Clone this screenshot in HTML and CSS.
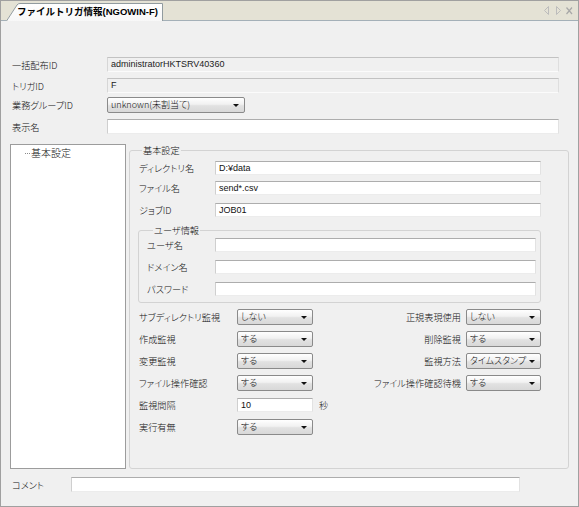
FILE: index.html
```html
<!DOCTYPE html>
<html lang="ja">
<head>
<meta charset="utf-8">
<title>ファイルトリガ情報</title>
<link rel="stylesheet" href="styles.css">
</head>
<body>
<div class="window">
  <div class="tabbar">
    <div class="tab">
      <svg class="tab-shape" width="157" height="18" viewBox="0 0 157 18">
        <defs>
          <linearGradient id="tg" x1="0" y1="0" x2="0" y2="1">
            <stop offset="0" stop-color="#ffffff"/>
            <stop offset="1" stop-color="#f7f7f7"/>
          </linearGradient>
        </defs>
        <path d="M0 18 L11 2 Q12 0.5 14 0.5 L156.5 0.5 L156.5 18 Z" fill="url(#tg)"/>
        <path d="M0.5 18 L11 2 Q12 0.5 14 0.5 L156.5 0.5 L156.5 18" fill="none" stroke="#919b9f"/>
      </svg>
      <div class="tab-label">ファイルトリガ情報(NGOWIN-F)</div>
    </div>
    <div class="tab-tools">
      <svg width="30" height="9" viewBox="0 0 30 9">
        <path d="M5.5 0.5 L1.5 4.5 L5.5 8.5 Z" fill="none" stroke="#bcbcbc"/>
        <path d="M13.5 0.5 L17.5 4.5 L13.5 8.5 Z" fill="none" stroke="#bcbcbc"/>
        <path d="M23.5 1.5 L29 8 M29 1.5 L23.5 8" fill="none" stroke="#a8a8a8" stroke-width="1.2"/>
      </svg>
    </div>
  </div>

  <div class="content">
    <div class="head-form">
      <div class="row">
        <span class="lbl">一括配布ID</span>
        <div class="field disabled wide latin">administratorHKTSRV40360</div>
      </div>
      <div class="row gap6">
        <span class="lbl">トリガID</span>
        <div class="field disabled wide latin">F</div>
      </div>
      <div class="row gap4">
        <span class="lbl">業務グループID</span>
        <div class="select sel-head"><span class="sel-text">unknown(未割当て)</span><span class="arrow"></span></div>
      </div>
      <div class="row gap6">
        <span class="lbl">表示名</span>
        <div class="field wide"></div>
      </div>
    </div>

    <div class="main">
      <div class="tree">
        <div class="tree-item"><span class="dots"></span><span class="tree-text">基本設定</span></div>
      </div>

      <fieldset class="group">
        <legend>基本設定</legend>
        <div class="g-row">
          <span class="g-lbl">ディレクトリ名</span>
          <div class="field g-field latin">D:¥data</div>
        </div>
        <div class="g-row mt6">
          <span class="g-lbl">ファイル名</span>
          <div class="field g-field latin">send*.csv</div>
        </div>
        <div class="g-row mt8">
          <span class="g-lbl">ジョブID</span>
          <div class="field g-field latin">JOB01</div>
        </div>

        <fieldset class="user">
          <legend>ユーザ情報</legend>
          <div class="u-row">
            <span class="u-lbl">ユーザ名</span>
            <div class="field u-field"></div>
          </div>
          <div class="u-row mt8">
            <span class="u-lbl">ドメイン名</span>
            <div class="field u-field"></div>
          </div>
          <div class="u-row mt8">
            <span class="u-lbl">パスワード</span>
            <div class="field u-field"></div>
          </div>
        </fieldset>

        <div class="opts">
          <span class="o-lbl">サブディレクトリ監視</span>
          <div class="select"><span class="sel-text">しない</span><span class="arrow"></span></div>
          <span class="o-lbl right">正規表現使用</span>
          <div class="select"><span class="sel-text">しない</span><span class="arrow"></span></div>

          <span class="o-lbl">作成監視</span>
          <div class="select"><span class="sel-text">する</span><span class="arrow"></span></div>
          <span class="o-lbl right">削除監視</span>
          <div class="select"><span class="sel-text">する</span><span class="arrow"></span></div>

          <span class="o-lbl">変更監視</span>
          <div class="select"><span class="sel-text">する</span><span class="arrow"></span></div>
          <span class="o-lbl right">監視方法</span>
          <div class="select"><span class="sel-text">タイムスタンプ</span><span class="arrow"></span></div>

          <span class="o-lbl">ファイル操作確認</span>
          <div class="select"><span class="sel-text">する</span><span class="arrow"></span></div>
          <span class="o-lbl right">ファイル操作確認待機</span>
          <div class="select"><span class="sel-text">する</span><span class="arrow"></span></div>

          <span class="o-lbl">監視間隔</span>
          <div class="field o-field latin">10</div>
          <span class="unit">秒</span>
          <span></span>

          <span class="o-lbl">実行有無</span>
          <div class="select"><span class="sel-text">する</span><span class="arrow"></span></div>
          <span></span>
          <span></span>
        </div>
      </fieldset>
    </div>

    <div class="comment-row">
      <span class="c-lbl">コメント</span>
      <div class="field c-field"></div>
    </div>
  </div>
</div>
</body>
</html>
```

FILE: styles.css
```css
* {
  box-sizing: border-box;
}

html,
body {
  margin: 0;
  padding: 0;
}

body {
  font-family: "Noto Sans CJK JP", sans-serif;
  font-size: 9.2px;
  line-height: 12px;
  font-weight: 300;
  font-feature-settings: "palt";
  color: #111;
  background: #f0f0f0;
}

.latin {
  font-family: "Liberation Sans", "Noto Sans CJK JP", sans-serif;
  font-size: 9px;
  font-weight: 400;
}

.window {
  width: 579px;
  height: 507px;
  border: 1px solid #a0a0a0;
  background: #f0f0f0;
  display: flex;
  flex-direction: column;
}

/* ---------- tab bar ---------- */
.tabbar {
  height: 20px;
  flex: none;
  background: #e4e2d5;
  border-bottom: 1px solid #a4b0b8;
  display: flex;
  align-items: flex-end;
}

.tab {
  position: relative;
  width: 157px;
  height: 18px;
  margin-left: 5px;
  margin-bottom: -1px;
}

.tab-shape {
  position: absolute;
  left: 0;
  top: 0;
}

.tab-label {
  position: relative;
  padding-left: 11px;
  line-height: 18px;
  font-family: "Liberation Sans", "Noto Sans CJK JP", sans-serif;
  font-size: 9.5px;
  font-weight: bold;
  color: #000;
  white-space: nowrap;
  font-feature-settings: normal;
}

.tab-tools {
  margin-left: auto;
  margin-right: 5px;
  align-self: center;
  display: flex;
}

/* ---------- content ---------- */
.content {
  flex: 1;
  display: flex;
  flex-direction: column;
  padding-top: 36px;
}

.head-form {
  padding-left: 11px;
  display: flex;
  flex-direction: column;
}

.row {
  display: flex;
  align-items: center;
}

.gap6 {
  margin-top: 6px;
}

.gap4 {
  margin-top: 4px;
}

.lbl {
  width: 95px;
  flex: none;
}

.field {
  height: 15px;
  border: 1px solid;
  border-color: #adadad #e2e2e2 #ececec #cfcfcf;
  background: #fff;
  padding-left: 3px;
  line-height: 13px;
  white-space: nowrap;
  overflow: hidden;
}

.field.disabled {
  background: #f0f0f0;
  border-color: #c2c2c2 #dedede #fbfbfb #d6d6d6;
  color: #222;
}

.wide {
  width: 452px;
}

.select {
  height: 16px;
  border: 1px solid #8a8a8a;
  border-radius: 2px;
  background: linear-gradient(#ffffff, #f1f1f1 45%, #e2e2e2 55%, #d8d8d8);
  display: flex;
  align-items: center;
  padding-left: 3px;
  white-space: nowrap;
  font-size: 9px;
}

.sel-head {
  width: 138px;
}

.sel-text {
  flex: 1;
  overflow: hidden;
}

.arrow {
  flex: none;
  width: 0;
  height: 0;
  border-left: 3px solid transparent;
  border-right: 3px solid transparent;
  border-top: 3px solid #111;
  margin-right: 5px;
  margin-left: 2px;
}

/* ---------- main area ---------- */
.main {
  display: flex;
  margin-top: 10px;
  padding-left: 9px;
  height: 325px;
  gap: 3px;
}

.tree {
  width: 116px;
  flex: none;
  border: 1px solid #9c9c9c;
  background: #fff;
}

.tree-item {
  display: flex;
  align-items: center;
  height: 12px;
  margin-top: 2px;
  padding-left: 14px;
  font-size: 10px;
}

.dots {
  width: 5px;
  height: 1px;
  border-bottom: 1px dotted #8a8a8a;
  margin-right: 1px;
}

fieldset {
  margin: 0;
  min-width: 0;
}

legend {
  padding: 0 1px;
  line-height: 12px;
}

.group {
  width: 440px;
  flex: none;
  padding: 5px 0 0 8px;
  border: 1px solid #d3d3d3;
  border-radius: 3px;
}

.group > legend {
  margin-left: 4px;
}

.g-row {
  display: flex;
  align-items: center;
  padding-left: 1px;
}

.mt6 {
  margin-top: 6px;
}

.mt8 {
  margin-top: 8px;
}

.g-lbl {
  width: 76px;
  flex: none;
}

.g-field {
  width: 326px;
  height: 14px;
  line-height: 12px;
}

.user {
  width: 403px;
  margin-top: 7px;
  padding: 2px 4px 6px 8px;
  border: 1px solid #d3d3d3;
  border-radius: 3px;
}

.user > legend {
  margin-left: 6px;
}

.u-row {
  display: flex;
  align-items: center;
}

.u-lbl {
  width: 68px;
  flex: none;
}

.u-field {
  width: 321px;
  height: 14px;
}

.opts {
  margin-top: 6px;
  padding-left: 1px;
  width: 403px;
  display: grid;
  grid-template-columns: 98px 76px 1fr 75px;
  grid-auto-rows: 16px;
  row-gap: 6px;
  align-items: center;
}

.o-lbl {
  white-space: nowrap;
}

.o-lbl.right {
  text-align: right;
  padding-right: 5px;
}

.o-field {
  width: 76px;
  height: 14px;
  line-height: 12px;
}

.unit {
  padding-left: 6px;
}

/* ---------- comment ---------- */
.comment-row {
  display: flex;
  align-items: center;
  margin-top: 8px;
  padding-left: 11px;
}

.c-lbl {
  width: 59px;
  flex: none;
}

.c-field {
  width: 449px;
  height: 15px;
}
```
